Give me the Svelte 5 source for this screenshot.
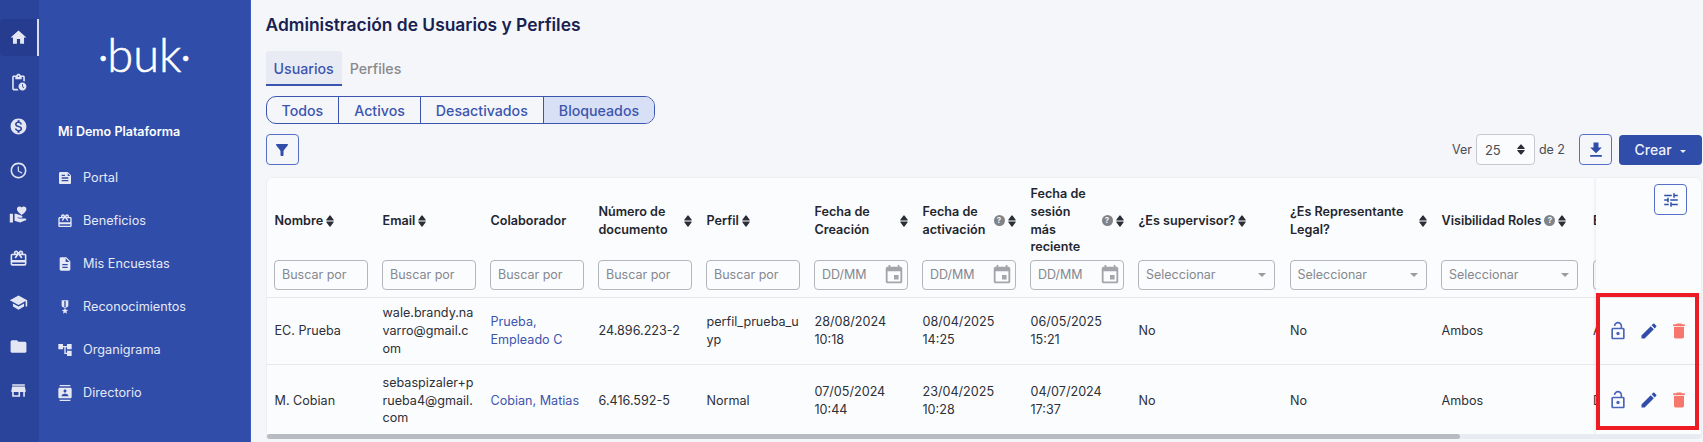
<script>
  const icons = {
    home: "M10 20v-6h4v6h5v-8h3L12 3 2 12h3v8z",
    pending: "M17 12c-2.76 0-5 2.24-5 5s2.24 5 5 5 5-2.24 5-5-2.24-5-5-5zm1.65 7.35L16.5 17.2V14h1v2.79l1.85 1.85-.7.71zM18 3h-3.18C14.4 1.84 13.3 1 12 1s-2.4.84-2.82 2H6c-1.1 0-2 .9-2 2v15c0 1.1.9 2 2 2h6.11c-.59-.57-1.07-1.25-1.42-2H6V5h2v3h8V5h2v5.08c.71.1 1.38.31 2 .6V5c0-1.1-.9-2-2-2zm-6 2c-.55 0-1-.45-1-1s.45-1 1-1 1 .45 1 1-.45 1-1 1z",
    money: "M12 2C6.48 2 2 6.48 2 12s4.48 10 10 10 10-4.48 10-10S17.52 2 12 2zm1.41 16.09V20h-2.67v-1.93c-1.71-.36-3.16-1.46-3.27-3.4h1.96c.1 1.05.82 1.87 2.65 1.87 1.96 0 2.4-.98 2.4-1.59 0-.83-.44-1.61-2.67-2.14-2.48-.6-4.18-1.62-4.18-3.67 0-1.72 1.39-2.84 3.11-3.21V4h2.67v1.95c1.86.45 2.79 1.86 2.85 3.39H14.3c-.05-1.11-.64-1.87-2.22-1.87-1.5 0-2.4.68-2.4 1.64 0 .84.65 1.39 2.67 1.91s4.18 1.39 4.18 3.91c-.01 1.83-1.38 2.83-3.12 3.16z",
    clock: "M11.99 2C6.47 2 2 6.48 2 12s4.47 10 9.99 10C17.52 22 22 17.52 22 12S17.52 2 11.99 2zM12 20c-4.42 0-8-3.58-8-8s3.58-8 8-8 8 3.58 8 8-3.58 8-8 8zm.5-13H11v6l5.25 3.15.75-1.23-4.5-2.67z",
    hand: "M1 11h4v11H1zm15-7.75C16.65 2.49 17.66 2 18.71 2 20.58 2 22 3.42 22 5.25c0 2.26-2.42 4.31-6 7.51-3.58-3.2-6-5.25-6-7.51C10 3.42 11.42 2 13.29 2c1.05 0 2.06.49 2.71 1.25zM20 17h-7l-2.09-.73.33-.94L13 16h2.82c.65 0 1.18-.53 1.18-1.18 0-.49-.31-.93-.77-1.11L8.97 11H7v9.02L14 22l8.01-3c-.01-1.1-.9-2-2.01-2z",
    gift: "M20 6h-2.18c.11-.31.18-.65.18-1 0-1.66-1.34-3-3-3-1.05 0-1.96.54-2.5 1.35l-.5.67-.5-.68C10.96 2.54 10.05 2 9 2 7.34 2 6 3.34 6 5c0 .35.07.69.18 1H4c-1.11 0-1.99.89-1.99 2L2 19c0 1.11.89 2 2 2h16c1.11 0 2-.89 2-2V8c0-1.11-.89-2-2-2zm-5-2c.55 0 1 .45 1 1s-.45 1-1 1-1-.45-1-1 .45-1 1-1zM9 4c.55 0 1 .45 1 1s-.45 1-1 1-1-.45-1-1 .45-1 1-1zm11 15H4v-2h16v2zm0-5H4V8h5.08L7 10.83 8.62 12 11 8.76l1-1.36 1 1.36L15.38 12 17 10.83 14.92 8H20v6z",
    school: "M5 13.18v4L12 21l7-3.82v-4L12 17l-7-3.82zM12 3L1 9l11 6 9-4.91V17h2V9L12 3z",
    folder: "M10 4H4c-1.1 0-1.99.9-1.99 2L2 18c0 1.1.9 2 2 2h16c1.1 0 2-.9 2-2V8c0-1.1-.9-2-2-2h-8l-2-2z",
    store: "M20 4H4v2h16V4zm1 10v-2l-1-5H4l-1 5v2h1v6h10v-6h4v6h2v-6h1zm-9 4H6v-4h6v4z",
    feed: "M16 3H5C3.9 3 3 3.9 3 5v14c0 1.1.9 2 2 2h14c1.1 0 2-.9 2-2V8L16 3zM7 7h5v2H7V7zm10 10H7v-2h10v2zm0-4H7v-2h10v2zm-1-4V5l4 4h-4z",
    doc: "M14 2H6c-1.1 0-1.99.9-1.99 2L4 20c0 1.1.89 2 1.99 2H18c1.1 0 2-.9 2-2V8l-6-6zm2 16H8v-2h8v2zm0-4H8v-2h8v2zm-3-5V3.5L18.5 9H13z",
    medal: "M17 10.43V2H7v8.43c0 .35.18.68.49.86l4.18 2.51-.99 2.34-3.41.29 2.59 2.24L9.07 22 12 20.23 14.93 22l-.78-3.33 2.59-2.24-3.41-.29-.99-2.34 4.18-2.51c.3-.18.48-.5.48-.86zm-4 1.8-1 .6-1-.6V3h2v9.23z",
    tree: "M22 11V3h-7v3H9V3H2v8h7V8h2v10h4v3h7v-8h-7v3h-2V8h2v3z",
    contacts: "M20 0H4v2h16V0zM4 24h16v-2H4v2zM20 4H4c-1.1 0-2 .9-2 2v12c0 1.1.9 2 2 2h16c1.1 0 2-.9 2-2V6c0-1.1-.9-2-2-2zm-8 2.75c1.24 0 2.25 1.01 2.25 2.25s-1.01 2.25-2.25 2.25S9.75 10.24 9.75 9 10.76 6.75 12 6.75zM17 17H7v-1.5c0-1.67 3.33-2.5 5-2.5s5 .83 5 2.5V17z",
    filter: "M4.25 5.61C6.27 8.2 10 13 10 13v6c0 .55.45 1 1 1h2c.55 0 1-.45 1-1v-6s3.72-4.8 5.74-7.39c.51-.66.04-1.61-.79-1.61H5.04c-.83 0-1.3.95-.79 1.61z",
    download: "M19 9h-4V3H9v6H5l7 7 7-7zM5 18v2h14v-2H5z",
    tune: "M3 17v2h6v-2H3zM3 5v2h10V5H3zm10 16v-2h8v-2h-8v-2h-2v6h2zM7 9v2H3v2h4v2h2V9H7zm14 4v-2H11v2h10zm-6-4h2V7h4V5h-4V3h-2v6z",
    lock: "M12 17c1.1 0 2-.9 2-2s-.9-2-2-2-2 .9-2 2 .9 2 2 2zm6-9h-1V6c0-2.76-2.24-5-5-5S7 3.24 7 6h1.9c0-1.71 1.39-3.1 3.1-3.1 1.71 0 3.1 1.39 3.1 3.1v2H6c-1.1 0-2 .9-2 2v10c0 1.1.9 2 2 2h12c1.1 0 2-.9 2-2V10c0-1.1-.9-2-2-2zm0 12H6V10h12v10z",
    edit: "M3 17.25V21h3.75L17.81 9.94l-3.75-3.75L3 17.25zM20.71 7.04c.39-.39.39-1.02 0-1.41l-2.34-2.34c-.39-.39-1.02-.39-1.41 0l-1.83 1.83 3.75 3.75 1.83-1.83z",
    trash: "M6 19c0 1.1.9 2 2 2h8c1.1 0 2-.9 2-2V7H6v12zM19 4h-3.5l-1-1h-5l-1 1H5v2h14V4z",
    event: "M17 12h-5v5h5v-5zM16 1v2H8V1H6v2H5c-1.11 0-1.99.9-1.99 2L3 19c0 1.1.89 2 2 2h14c1.1 0 2-.9 2-2V5c0-1.1-.9-2-2-2h-1V1h-2zm3 18H5V8h14v11z",
    sort: "M12 0.5 Q13 0.5 14 1.5 L23 9.5 Q24 11 22 11 H2 Q0 11 1 9.5 L10 1.5 Q11 0.5 12 0.5 Z M12 23.5 Q11 23.5 10 22.5 L1 14.5 Q0 13 2 13 H22 Q24 13 23 14.5 L14 22.5 Q13 23.5 12 23.5 Z"
  };

  const rail = ["home", "pending", "money", "clock", "hand", "gift", "school", "folder", "store"];
  const nav = [
    ["feed", "Portal"],
    ["gift", "Beneficios"],
    ["doc", "Mis Encuestas"],
    ["medal", "Reconocimientos"],
    ["tree", "Organigrama"],
    ["contacts", "Directorio"]
  ];
  const columns = [
    { label: "Nombre", sort: true, kind: "text", w: 108 },
    { label: "Email", sort: true, kind: "text", w: 108 },
    { label: "Colaborador", kind: "text", w: 108 },
    { label: "Número de documento", sort: true, kind: "text", w: 108 },
    { label: "Perfil", sort: true, kind: "text", w: 108 },
    { label: "Fecha de Creación", sort: true, kind: "date", w: 108 },
    { label: "Fecha de activación", sort: true, help: true, kind: "date", w: 108 },
    { label: "Fecha de sesión más reciente", sort: true, help: true, kind: "date", w: 108 },
    { label: "¿Es supervisor?", sort: true, kind: "select", w: 151.5 },
    { label: "¿Es Representante Legal?", sort: true, kind: "select", w: 151.5 },
    { label: "Visibilidad Roles", sort: true, help: true, kind: "select", w: 151.5 },
    { label: "Estado", kind: "text", w: 151 }
  ];
  const rows = [
    ["EC. Prueba", "wale.brandy.navarro@gmail.com", "Prueba, Empleado C", "24.896.223-2", "perfil_prueba_uyp", "28/08/2024 10:18", "08/04/2025 14:25", "06/05/2025 15:21", "No", "No", "Ambos", "Activo"],
    ["M. Cobian", "sebaspizaler+prueba4@gmail.com", "Cobian, Matias", "6.416.592-5", "Normal", "07/05/2024 10:44", "23/04/2025 10:28", "04/07/2024 17:37", "No", "No", "Ambos", "Desactivado"]
  ];
</script>

{#snippet icon(name, size)}
  <svg width={size} height={size} viewBox="0 0 24 24" fill="currentColor" aria-hidden="true"><path d={icons[name]} /></svg>
{/snippet}

<div class="page">
  <nav class="rail">
    {#each rail as name, i}
      <div class="rail-item" class:active={i === 0}>{@render icon(name, 19)}</div>
    {/each}
  </nav>

  <aside class="side">
    <div class="logo"><span class="dot">·</span>buk<span class="dot">·</span></div>
    <div class="company">Mi Demo Plataforma</div>
    {#each nav as [name, label]}
      <div class="nav-item">{@render icon(name, 16)}<span>{label}</span></div>
    {/each}
  </aside>

  <main class="main">
    <h1>Administración de Usuarios y Perfiles</h1>

    <div class="tabs">
      <div class="tab active">Usuarios</div>
      <div class="tab">Perfiles</div>
    </div>

    <div class="group">
      <div class="seg">Todos</div>
      <div class="seg">Activos</div>
      <div class="seg">Desactivados</div>
      <div class="seg on">Bloqueados</div>
    </div>

    <div class="toolbar">
      <button class="outline">{@render icon("filter", 18)}</button>
      <div class="tools">
        <span>Ver</span>
        <div class="per-page">25 <svg class="arrows" width="8" height="11" viewBox="0 0 24 24" preserveAspectRatio="none"><path d={icons.sort} /></svg></div>
        <span>de 2</span>
        <button class="outline dl">{@render icon("download", 20)}</button>
        <button class="create">Crear <i class="caret"></i></button>
      </div>
    </div>

    <div class="card">
      <div class="scroll">
        <table>
          <colgroup>
            {#each columns as c}<col style="width: {c.w}px" />{/each}
            <col style="width: 105px" />
          </colgroup>
          <thead>
            <tr>
              {#each columns as c}
                <th>
                  <div class="head">
                    <span class="label">{c.label}</span>
                    {#if c.help}<span class="help">?</span>{/if}
                    {#if c.sort}<svg class="arrows" width="8" height="12" viewBox="0 0 24 24" preserveAspectRatio="none"><path d={icons.sort} /></svg>{/if}
                  </div>
                  {#if c.kind === "text"}
                    <div class="field">Buscar por</div>
                  {:else if c.kind === "date"}
                    <div class="field date">DD/MM {@render icon("event", 22)}</div>
                  {:else}
                    <div class="field select">Seleccionar <i class="caret"></i></div>
                  {/if}
                </th>
              {/each}
              <th class="actions top">
                <button class="outline cfg">{@render icon("tune", 18)}</button>
              </th>
            </tr>
          </thead>
          <tbody>
            {#each rows as row, r}
              <tr class={r === 0 ? "r1" : "r2"}>
                {#each row as value, i}
                  <td class:mail={i === 1} class:link={i === 2} class:perfil={i === 4}>{value}</td>
                {/each}
                <td class="actions">
                  <div class="acts">
                    <span class="lock">{@render icon("lock", 20)}</span>
                    <span class="blue">{@render icon("edit", 20)}</span>
                    <span class="red">{@render icon("trash", 20)}</span>
                  </div>
                </td>
              </tr>
            {/each}
          </tbody>
        </table>
      </div>
      <div class="track"><div class="thumb"></div></div>
      <div class="mark"></div>
    </div>
  </main>
</div>

<style>
  :global(body) {
    margin: 0;
    overflow: hidden;
    background: #f5f6fa;
    font-family: Inter, "Liberation Sans", sans-serif;
  }
  .page {
    display: flex;
    height: 442px;
    overflow: hidden;
    color: #2d3038;
  }
  svg {
    display: block;
    flex: none;
  }

  .rail {
    width: 39px;
    flex: none;
    background: #2a439b;
    color: #e4e7f3;
    padding-top: 19px;
    box-sizing: border-box;
  }
  .rail-item {
    height: 44px;
    display: flex;
    align-items: center;
    justify-content: center;
    padding-right: 2px;
    box-sizing: border-box;
  }
  .rail-item.active {
    height: 37px;
    margin-bottom: 4px;
    background: #263d8f;
    border-right: 2px solid #d9dded;
    border-radius: 4px 0 0 4px;
    padding-right: 0;
  }

  .side {
    width: 212px;
    flex: none;
    background: #2f4da9;
    color: #eef0f8;
    padding-left: 19px;
    box-sizing: border-box;
    border-right: 1px solid #3d5cc0;
  }
  .logo {
    margin: 25px 0 0 41px;
    height: 59px;
    font-family: Lato, sans-serif;
    font-weight: 300;
    font-size: 47px;
    line-height: 59px;
    -webkit-text-stroke: 0.6px #fff;
    color: #fff;
  }
  .dot {
    font-size: 32px;
    font-weight: 400;
    vertical-align: 4px;
  }
  .company {
    margin: 40px 0 19px;
    font-size: 12.5px;
    font-weight: 600;
    line-height: 16px;
    color: #fff;
  }
  .nav-item {
    height: 43px;
    display: flex;
    align-items: center;
    gap: 10px;
    font-size: 12.7px;
    margin-left: -1px;
    margin-top: -3px;
    margin-bottom: 3px;
    color: #e6e9f5;
  }

  .main {
    flex: 1;
    min-width: 0;
    padding: 15px 1px 0 14.5px;
    box-sizing: border-box;
  }
  h1 {
    margin: 0;
    font-size: 17.4px;
    line-height: 20px;
    font-weight: 600;
    color: #182150;
  }
  .tabs {
    display: flex;
    margin-top: 16px;
    height: 35px;
    font-size: 14.2px;
  }
  .tab {
    padding: 0 8px;
    line-height: 36px;
    color: #8a8a8a;
    font-weight: 500;
  }
  .tab.active {
    height: 33px;
    color: #3c55ae;
    background: #e9ebf4;
    border-bottom: 2px solid #3c55ae;
    border-radius: 3px 3px 0 0;
  }
  .group {
    display: inline-flex;
    margin-top: 10px;
    height: 28px;
    border: 1px solid #3c55ae;
    border-radius: 10px;
    overflow: hidden;
    box-sizing: border-box;
    font-size: 14.2px;
    font-weight: 500;
    color: #3c55ae;
  }
  .seg {
    padding: 0 15px;
    line-height: 28px;
    border-left: 1px solid #3c55ae;
  }
  .seg:first-child {
    border-left: 0;
  }
  .seg.on {
    background: #d8e0f6;
  }
  .toolbar {
    display: flex;
    justify-content: space-between;
    align-items: center;
    margin-top: 10px;
    height: 31px;
  }
  .tools {
    display: flex;
    align-items: center;
    font-size: 12.5px;
    color: #4a4d55;
  }
  button {
    font-family: inherit;
    padding: 0;
    cursor: pointer;
  }
  .outline {
    width: 33px;
    height: 31px;
    display: flex;
    align-items: center;
    justify-content: center;
    background: transparent;
    border: 1px solid #5570c6;
    border-radius: 4px;
    color: #2f4da9;
  }
  .per-page {
    width: 59px;
    height: 31px;
    margin: 0 4px;
    padding: 0 9px 0 8px;
    box-sizing: border-box;
    display: flex;
    align-items: center;
    justify-content: space-between;
    background: #fbfcfe;
    border: 1px solid #c6c8cf;
    border-radius: 4px;
    font-size: 13px;
  }
  .dl {
    margin-left: 14px;
  }
  .create {
    width: 83px;
    height: 30px;
    margin-left: 7px;
    border: 0;
    border-radius: 4px;
    background: #2f4da9;
    color: #eef0f8;
    font-size: 14px;
    font-weight: 500;
  }
  .caret {
    display: inline-block;
    width: 0;
    height: 0;
    margin-left: 5px;
    vertical-align: 2px;
    border: 4px solid transparent;
    border-top-color: currentColor;
    border-bottom: 0;
  }
  .create .caret {
    border-width: 3px 3px 0;
  }

  .card {
    position: relative;
    margin-top: 12px;
    background: #fbfcfe;
    border: 1px solid #eceef2;
    border-bottom: 0;
    border-radius: 6px 6px 0 0;
    box-sizing: border-box;
  }
  .scroll {
    overflow: hidden;
    border-radius: 6px 6px 0 0;
  }
  table {
    table-layout: fixed;
    width: 1574px;
    border-collapse: separate;
    border-spacing: 0;
    font-size: 12.6px;
    line-height: 17.7px;
  }
  th,
  td {
    padding: 0 7px 0 7.5px;
    text-align: left;
    vertical-align: middle;
    box-sizing: border-box;
  }
  td {
    padding-left: 8px;
  }
  th {
    height: 120px;
    padding-top: 7px;
    padding-bottom: 7px;
    border-bottom: 1px solid #e6e8ee;
    font-weight: 600;
    font-size: 12.6px;
    color: #23262e;
  }
  .label {
    padding-left: 0.5px;
  }
  .head {
    display: flex;
    align-items: center;
    gap: 3px;
    height: 71px;
    margin-bottom: 4px;
  }
  .arrows {
    fill: #2b2e36;
  }
  .help {
    width: 11px;
    height: 11px;
    flex: none;
    border-radius: 50%;
    background: #808389;
    color: #fff;
    font-size: 8px;
    line-height: 11px;
    text-align: center;
  }
  .field {
    height: 30px;
    padding: 0 7px;
    box-sizing: border-box;
    display: flex;
    align-items: center;
    justify-content: space-between;
    background: #fbfcfe;
    border: 1px solid #b4b6bd;
    border-radius: 4px;
    font-size: 12.5px;
    font-weight: 400;
    color: #85888f;
    white-space: nowrap;
  }
  .field.date {
    padding: 0 2px 0 7px;
  }
  .field.date svg {
    color: #a3a5ab;
  }
  .field.select {
    padding: 0 8px 0 7px;
  }
  .field .caret {
    color: #9a9ca2;
  }
  td {
    border-bottom: 1px solid #e6e8ee;
  }
  .r1 td {
    height: 67px;
  }
  .r2 td {
    height: 69px;
    border-bottom: 0;
    padding-top: 2px;
  }
  .mail,
  .perfil {
    word-break: break-all;
  }
  .link {
    color: #3c55ae;
  }
  .actions,
  .r2 td.actions {
    position: sticky;
    right: 0;
    padding: 0;
    background: #fbfcfe;
    box-shadow: -2px 0 2px rgba(30, 35, 60, 0.05);
    z-index: 1;
  }
  .top {
    vertical-align: top;
    padding: 6px 14px 0 0;
  }
  .cfg {
    margin-left: auto;
  }
  .acts {
    display: flex;
    justify-content: center;
    gap: 10.5px;
  }
  .blue {
    color: #2f4da9;
  }
  .lock {
    color: #4a64bb;
  }
  .red {
    color: #f8776c;
  }
  .track {
    height: 5px;
    background: #e9ebf3;
    border-radius: 0 0 3px 3px;
  }
  .thumb {
    width: 1193px;
    height: 5px;
    border-radius: 3px;
    background: #b9bbc3;
  }
  .mark {
    position: absolute;
    top: 115px;
    right: 2px;
    width: 103px;
    height: 137px;
    box-sizing: border-box;
    border: 4px solid #ed1c24;
    z-index: 2;
  }
</style>
